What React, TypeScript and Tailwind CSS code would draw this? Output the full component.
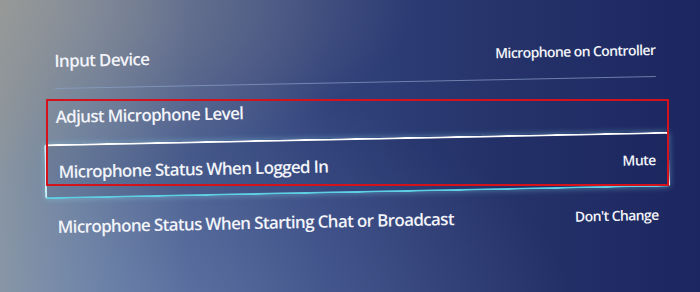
import React from 'react'

type Row = { label: string; value?: string; focused?: boolean; divider?: boolean }

const rows: Row[] = [
  { label: 'Input Device', value: 'Microphone on Controller', divider: true },
  { label: 'Adjust Microphone Level' },
  { label: 'Microphone Status When Logged In', value: 'Mute', focused: true },
  { label: 'Microphone Status When Starting Chat or Broadcast', value: "Don't Change" },
]

export default function App() {
  return (
    <div
      className="relative w-[700px] h-[292px] overflow-hidden font-['Open_Sans',sans-serif] text-white bg-[radial-gradient(ellipse_at_0%_0%,rgba(160,156,148,0.6),transparent_42%),radial-gradient(ellipse_at_22%_115%,rgba(130,155,200,0.4),transparent_55%),linear-gradient(to_right,#8a949c_0%,#6c7f9c_11%,#46598b_27%,#31427b_47%,#26346b_70%,#1c2660_100%)]"
    >
      {/* settings list, photographed at a slight tilt */}
      <div className="pt-[28px] pl-[44px]">
        <div className="w-[625px] rotate-[-1.15deg]">
          {rows.map((row) => (
            <SettingRow key={row.label} row={row} />
          ))}
        </div>
      </div>

      {/* annotation box */}
      <div className="absolute left-[46px] top-[99px] w-[623px] h-[87px] border-2 border-[#d3121c]" />
    </div>
  )
}

function SettingRow({ row }: { row: Row }) {
  const label = 'text-[17px] font-semibold tracking-[-0.65px] text-[#f2f4f9]'
  const value = 'text-[14px] font-semibold tracking-[-0.6px] text-[#f2f4f9]'

  if (row.focused) {
    return (
      <div className="h-[55px] flex items-center justify-between px-3 rounded-[3px] border-2 border-white border-l-[#c9eef7] border-b-[#5fd0e4] shadow-[0_0_6px_rgba(140,220,240,0.45)] bg-[rgba(20,30,80,0.12)]">
        <span className={label}>{row.label}</span>
        {row.value && <span className={value}>{row.value}</span>}
      </div>
    )
  }
  return (
    <div className="h-[55px] flex flex-col px-3">
      <div className="flex-1 flex items-center justify-between">
        <span className={label}>{row.label}</span>
        {row.value && <span className={value}>{row.value}</span>}
      </div>
      {row.divider && <div className="h-px bg-[#8aa0c8]/70" />}
    </div>
  )
}
